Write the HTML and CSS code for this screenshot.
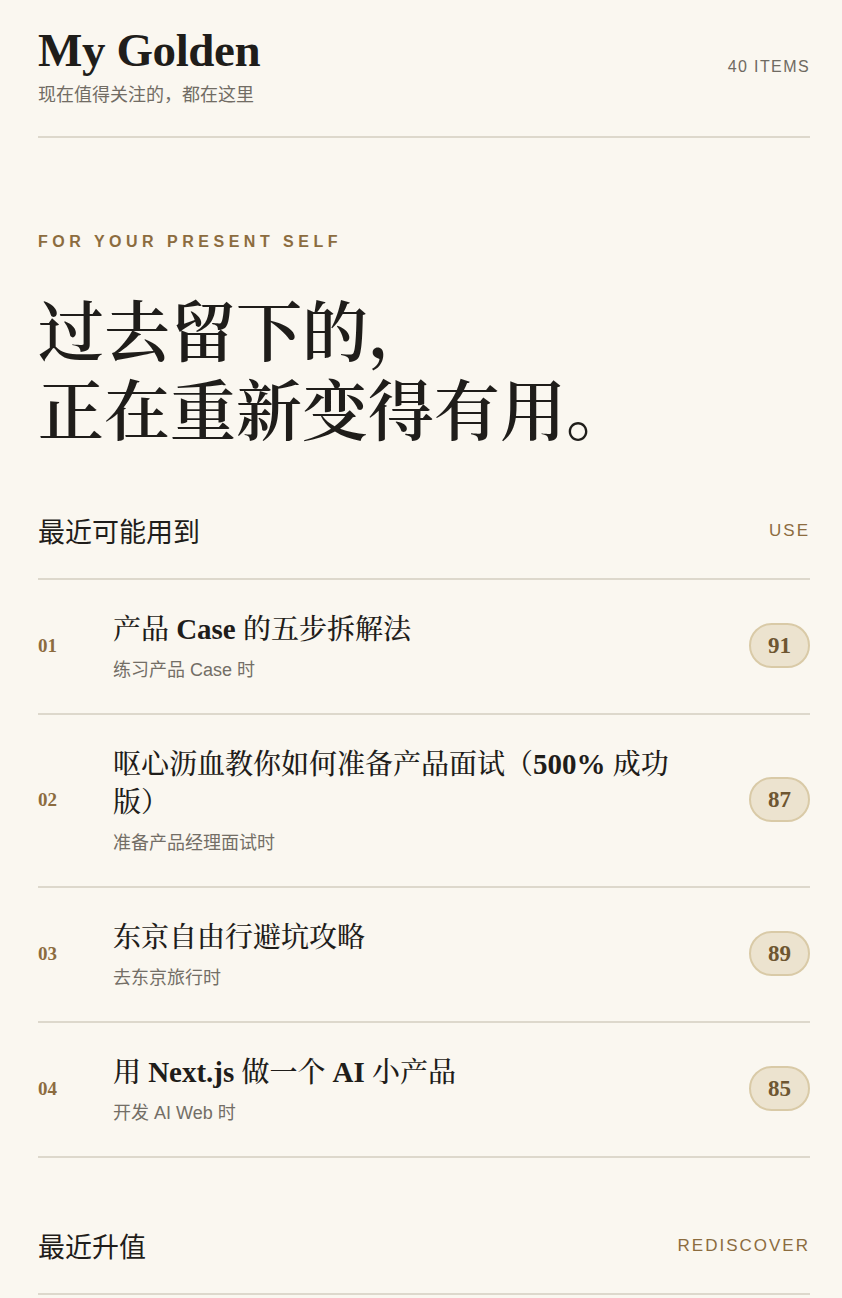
FILE: index.html
```html
<!DOCTYPE html>
<html lang="zh-CN">
<head>
  <meta charset="UTF-8" />
  <meta name="viewport" content="width=device-width, initial-scale=1.0"/>
  <title>My Golden</title>
  <link rel="stylesheet" href="styles.css">
</head>
<body>
<div class="page">
  <header class="top">
    <div class="brand">
      <h1>My Golden</h1>
      <div class="tagline">现在值得关注的，都在这里</div>
    </div>
    <div class="count">40 ITEMS</div>
  </header>

  <section class="hero">
    <div class="eyebrow">FOR YOUR PRESENT SELF</div>
    <h2>过去留下的，<br>正在重新变得有用。</h2>
  </section>

  <!-- 最近可能用到 -->
  <section class="group">
    <div class="group-head">
      <div class="group-title">最近可能用到</div>
      <div class="group-tag">USE</div>
    </div>
    <div class="item">
      <div class="num">01</div>
      <div class="body">
        <div class="title">产品 <span class="en">Case</span> 的五步拆解法</div>
        <div class="when">练习产品 Case 时</div>
      </div>
      <div class="score">91</div>
    </div>
    <div class="item">
      <div class="num">02</div>
      <div class="body">
        <div class="title">呕心沥血教你如何准备产品面试（<span class="en">500%</span> 成功版）</div>
        <div class="when">准备产品经理面试时</div>
      </div>
      <div class="score">87</div>
    </div>
    <div class="item">
      <div class="num">03</div>
      <div class="body">
        <div class="title">东京自由行避坑攻略</div>
        <div class="when">去东京旅行时</div>
      </div>
      <div class="score">89</div>
    </div>
    <div class="item">
      <div class="num">04</div>
      <div class="body">
        <div class="title">用 <span class="en">Next.js</span> 做一个 <span class="en">AI</span> 小产品</div>
        <div class="when">开发 AI Web 时</div>
      </div>
      <div class="score">85</div>
    </div>
  </section>

  <!-- 最近升值 -->
  <section class="group">
    <div class="group-head">
      <div class="group-title">最近升值</div>
      <div class="group-tag">REDISCOVER</div>
    </div>
  </section>
</div>
</body>
</html>
```

FILE: styles.css
```css
body {
  margin: 0;
  background-color: #faf7f0;
  color: #1f1d1a;
  font-family: "Liberation Sans", "Noto Sans CJK SC", sans-serif;
}
.page {
  padding: 26px 32px 0 38px;
}
.top {
  display: flex;
  justify-content: space-between;
  align-items: center;
  padding-bottom: 28px;
  border-bottom: 2px solid #ddd8cc;
}
.brand h1 {
  margin: 0;
  font-family: "Liberation Serif", "Noto Serif CJK SC", serif;
  font-size: 47px;
  line-height: 48px;
  font-weight: bold;
  letter-spacing: -0.4px;
}
.tagline {
  margin-top: 8px;
  font-size: 18px;
  line-height: 26px;
  color: #716c64;
}
.count {
  font-size: 16px;
  letter-spacing: 1.4px;
  color: #6f6a62;
}
.hero {
  padding-top: 94px;
}
.eyebrow {
  font-size: 16px;
  line-height: 20px;
  font-weight: bold;
  letter-spacing: 4.5px;
  color: #8c6c3f;
}
.hero h2 {
  margin: 36px 0 0;
  font-family: "Noto Serif CJK SC", "Liberation Serif", "Noto Sans CJK SC", serif;
  font-size: 66px;
  line-height: 79px;
  font-weight: 600;
}
.group {
  margin-top: 68px;
}
.group + .group {
  margin-top: 71px;
}
.group-head {
  display: flex;
  justify-content: space-between;
  align-items: center;
  padding-bottom: 30px;
  border-bottom: 2px solid #ddd8cc;
}
.group-title {
  font-family: "Noto Sans CJK SC", sans-serif;
  font-size: 27px;
  line-height: 34px;
}
.group-tag {
  font-size: 17px;
  letter-spacing: 2px;
  color: #8c6c3f;
}
.item {
  display: flex;
  align-items: center;
  padding: 28px 0 30px;
  border-bottom: 2px solid #ddd8cc;
}
.num {
  width: 75px;
  flex-shrink: 0;
  font-family: "Liberation Serif", serif;
  font-size: 19px;
  font-weight: bold;
  color: #8c6c3f;
}
.body {
  flex: 1;
  padding-right: 60px;
}
.title {
  max-width: 580px;
  font-family: "Noto Serif CJK SC", "Noto Sans CJK SC", serif;
  font-size: 28px;
  line-height: 38px;
  font-weight: 500;
}
.title .en {
  font-family: "Liberation Serif", serif;
  font-weight: bold;
  font-size: 29px;
  line-height: 1;
}
.when {
  margin-top: 11px;
  font-size: 18px;
  line-height: 26px;
  color: #736e66;
}
.score {
  flex-shrink: 0;
  min-width: 57px;
  height: 41px;
  display: flex;
  justify-content: center;
  align-items: center;
  box-sizing: content-box;
  background: #ece3cf;
  border: 2px solid #d9caa7;
  border-radius: 999px;
  font-family: "Liberation Serif", serif;
  font-size: 23px;
  font-weight: bold;
  color: #6e5631;
}
```
